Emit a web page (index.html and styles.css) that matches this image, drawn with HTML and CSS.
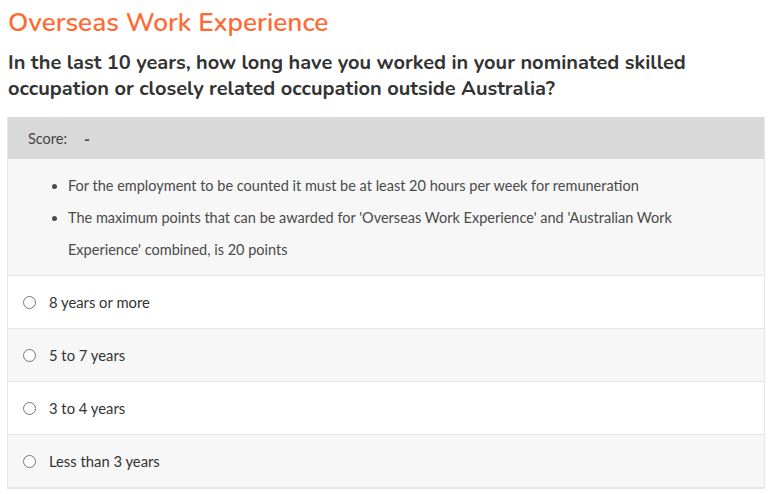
FILE: index.html
```html
<!DOCTYPE html>
<html>
<head>
<meta charset="utf-8">
<link rel="stylesheet" href="styles.css">
</head>
<body>
<div class="page">
  <h1 class="title">Overseas Work Experience</h1>
  <h2 class="question">In the last 10 years, how long have you worked in your nominated skilled occupation or closely related occupation outside Australia?</h2>
  <div class="card">
    <div class="score"><span>Score:</span><span class="dash">-</span></div>
    <div class="info">
      <ul>
        <li>For the employment to be counted it must be at least 20 hours per week for remuneration</li>
        <li>The maximum points that can be awarded for 'Overseas Work Experience' and 'Australian Work Experience' combined, is 20 points</li>
      </ul>
    </div>
    <label class="option"><span class="radio"></span>8 years or more</label>
    <label class="option alt"><span class="radio"></span>5 to 7 years</label>
    <label class="option"><span class="radio"></span>3 to 4 years</label>
    <label class="option alt"><span class="radio"></span>Less than 3 years</label>
  </div>
</div>
</body>
</html>
```

FILE: styles.css
```css
html, body { margin: 0; padding: 0; background: #fff; }
body { font-family: "Nunito", "Lato", "Open Sans", sans-serif; color: #333; }
.page { padding: 6px 9px 0 7px; }
.title {
  margin: 0 0 0 1px;
  font-family: "Nunito", "Open Sans", sans-serif;
  font-size: 26.2px;
  font-weight: 600;
  line-height: 34px;
  color: #ff6a34;
}
.question {
  margin: 10px 0 15px 1px;
  font-family: "Nunito", "Open Sans", sans-serif;
  font-size: 20px;
  font-weight: 700;
  line-height: 26px;
  color: #333;
}
.card { border: 1px solid #e6e6e6; border-top: none; }
.score {
  height: 42px;
  background: #d9d9d9;
  display: flex;
  align-items: center;
  padding-left: 20px;
  font-family: "Lato", sans-serif;
  font-size: 14.5px;
  color: #444;
  gap: 17px;
}
.dash { font-weight: 700; font-size: 16px; }
.info {
  background: #f7f7f7;
  padding: 11px 0 9px 0;
  border-bottom: 1px solid #e6e6e6;
}
.info ul { margin: 0; padding-left: 60px; padding-right: 60px; }
.info li {
  font-family: "Lato", sans-serif;
  font-size: 14.5px;
  line-height: 32px;
  color: #4a4a4a;
}
.option {
  display: flex;
  align-items: center;
  height: 52px;
  padding-left: 15px;
  border-bottom: 1px solid #e6e6e6;
  font-family: "Lato", sans-serif;
  font-size: 14.8px;
  color: #333;
  background: #fff;
}
.option.alt { background: #f7f7f7; }
.radio {
  width: 11px;
  height: 11px;
  border: 1px solid #777;
  border-radius: 50%;
  background: #fff;
  margin-right: 13px;
  box-sizing: content-box;
}
```
